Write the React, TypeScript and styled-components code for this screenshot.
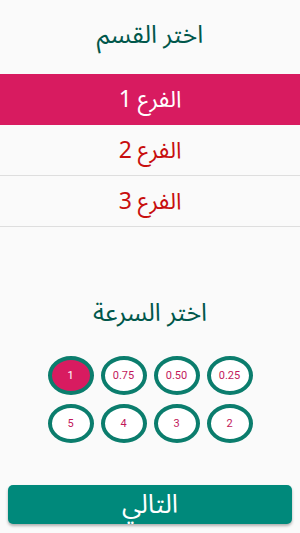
import styled, { createGlobalStyle } from "styled-components";
import { useState } from "react";

const GlobalStyle = createGlobalStyle`
  html, body {
    margin: 0;
    padding: 0;
    background: #fafafa;
  }
  body {
    font-family: "Noto Sans Arabic", "Noto Naskh Arabic", "Noto Sans", "DejaVu Sans", sans-serif;
  }
`;

const Screen = styled.div`
  width: 300px;
  height: 533px;
  display: flex;
  flex-direction: column;
  background: #fafafa;
  direction: rtl;
`;

const Title = styled.div<{ $height: number; $gap: number }>`
  height: ${(p) => p.$height}px;
  margin-bottom: ${(p) => p.$gap}px;
  display: flex;
  align-items: center;
  justify-content: center;
  color: #00574b;
  font-size: 25px;
`;

const SectionList = styled.div`
  display: flex;
  flex-direction: column;
`;

const SectionRow = styled.div<{ $active: boolean }>`
  height: 50px;
  display: flex;
  align-items: center;
  justify-content: center;
  font-size: 23px;
  background: ${(p) => (p.$active ? "#d81b60" : "transparent")};
  color: ${(p) => (p.$active ? "#ffffff" : "#c80e0e")};
  border-bottom: 1px solid ${(p) => (p.$active ? "#d81b60" : "#dedede")};
`;

const SpeedArea = styled.div`
  margin-top: 66px;
  display: flex;
  flex-direction: column;
`;

const OvalRow = styled.div`
  display: flex;
  justify-content: center;
  gap: 7px;
  margin-bottom: 9px;
`;

const Oval = styled.div<{ $active: boolean }>`
  width: 46px;
  height: 39px;
  box-sizing: border-box;
  border-radius: 50%;
  border: 4px solid #0b7d6d;
  background: ${(p) => (p.$active ? "#d81b60" : "#ffffff")};
  color: ${(p) => (p.$active ? "#ffffff" : "#c2185b")};
  font-family: Roboto, "Liberation Sans", sans-serif;
  font-size: 11px;
  display: flex;
  align-items: center;
  justify-content: center;
  direction: ltr;
`;

const Spacer = styled.div`
  flex: 1;
`;

const NextButton = styled.button`
  margin: 0 8px 9px;
  height: 39px;
  border: none;
  border-radius: 5px;
  background: #00897b;
  color: #ffffff;
  font-family: inherit;
  font-size: 26px;
  box-shadow: 0 2px 3px rgba(0, 0, 0, 0.3);
  display: flex;
  align-items: center;
  justify-content: center;
`;

const sections = ["الفرع 1", "الفرع 2", "الفرع 3"];
// listed in right-to-left order
const speedRows = [
  ["0.25", "0.50", "0.75", "1"],
  ["2", "3", "4", "5"],
];

const App = () => {
  const [section, setSection] = useState(0);
  const [speed, setSpeed] = useState("1");

  return (
    <Screen>
      <GlobalStyle />
      <Title $height={70} $gap={4}>
        اختر القسم
      </Title>
      <SectionList>
        {sections.map((name, i) => (
          <SectionRow key={name} $active={i === section} onClick={() => setSection(i)}>
            {name}
          </SectionRow>
        ))}
      </SectionList>
      <SpeedArea>
        <Title $height={40} $gap={23}>
          اختر السرعة
        </Title>
        {speedRows.map((row, r) => (
          <OvalRow key={r}>
            {row.map((v) => (
              <Oval key={v} $active={v === speed} onClick={() => setSpeed(v)}>
                {v}
              </Oval>
            ))}
          </OvalRow>
        ))}
      </SpeedArea>
      <Spacer />
      <NextButton>التالي</NextButton>
    </Screen>
  );
};

export default App;
